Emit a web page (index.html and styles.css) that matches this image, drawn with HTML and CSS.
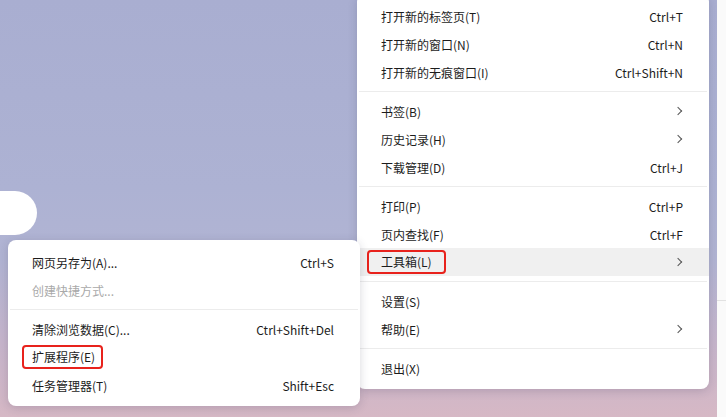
FILE: index.html
```html
<!DOCTYPE html>
<html lang="zh-CN">
<head>
    <meta charset="UTF-8">
    <meta name="viewport" content="width=device-width, initial-scale=1.0">
    <title>菜单</title>
    <link rel="stylesheet" href="styles.css">
</head>
<body>
    <div id="desk">
        <div class="page">
            <div class="pill"></div>
        </div>
        <div class="side">
            <div class="side_top"></div>
        </div>

        <div class="menu" id="main_menu">
            <div class="row"><span>打开新的标签页(T)</span><span class="key">Ctrl+T</span></div>
            <div class="row"><span>打开新的窗口(N)</span><span class="key">Ctrl+N</span></div>
            <div class="row"><span>打开新的无痕窗口(I)</span><span class="key">Ctrl+Shift+N</span></div>
            <div class="sep"></div>
            <div class="row"><span>书签(B)</span><span class="arrow"></span></div>
            <div class="row"><span>历史记录(H)</span><span class="arrow"></span></div>
            <div class="row"><span>下载管理(D)</span><span class="key">Ctrl+J</span></div>
            <div class="sep"></div>
            <div class="row"><span>打印(P)</span><span class="key">Ctrl+P</span></div>
            <div class="row"><span>页内查找(F)</span><span class="key">Ctrl+F</span></div>
            <div class="row hover"><span class="mark wide">工具箱(L)</span><span class="arrow"></span></div>
            <div class="sep"></div>
            <div class="row"><span>设置(S)</span></div>
            <div class="row"><span>帮助(E)</span><span class="arrow"></span></div>
            <div class="sep"></div>
            <div class="row"><span>退出(X)</span></div>
        </div>

        <div class="menu" id="sub_menu">
            <div class="row"><span>网页另存为(A)...</span><span class="key">Ctrl+S</span></div>
            <div class="row off"><span>创建快捷方式...</span></div>
            <div class="sep"></div>
            <div class="row"><span>清除浏览数据(C)...</span><span class="key">Ctrl+Shift+Del</span></div>
            <div class="row"><span class="mark tight">扩展程序(E)</span></div>
            <div class="row"><span>任务管理器(T)</span><span class="key">Shift+Esc</span></div>
        </div>
    </div>
</body>
</html>
```

FILE: styles.css
```css
body
{
    margin: 0;
    font-family: "Noto Sans CJK SC", "Noto Sans", sans-serif;
    font-size: 12px;
    color: #1c1c1c;
}
#desk
{
    position: relative;
    display: flex;
    width: 726px;
    height: 417px;
    overflow: hidden;
    background: linear-gradient(180deg, #a9aed1 0%, #adb2d3 45%, #b1b4d3 62%, #c6b5cb 82%, #d6b8c5 100%);
}
.page
{
    flex: 1;
    padding-top: 191px;
}
.pill
{
    width: 37px;
    height: 44px;
    background-color: #ffffff;
    border-radius: 0 22px 22px 0;
}
.side
{
    width: 9px;
    background-color: #fafafa;
}
.side_top
{
    height: 300px;
    border-bottom: 1px solid #e2e2e2;
}
.menu
{
    position: absolute;
    width: 352px;
    background-color: #ffffff;
    border-radius: 8px;
    box-shadow: 0px 2px 10px 0px rgba(40, 40, 70, 0.18);
}
#main_menu
{
    left: 357px;
    top: -6px;
    padding: 8px 0 7px 0;
}
#sub_menu
{
    left: 8px;
    top: 240px;
    padding: 8px 0 7px 0;
}
.row
{
    display: flex;
    justify-content: space-between;
    align-items: center;
    height: 28px;
    padding: 0 26px 0 24px;
}
.hover
{
    background-color: #f0f0f0;
}
.off
{
    color: #a9a9a9;
}
.key
{
    color: #1c1c1c;
}
.sep
{
    height: 1px;
    margin: 5px 2px;
    background-color: #ececec;
}
.arrow
{
    width: 5px;
    height: 5px;
    margin-right: 2px;
    border-top: 1.5px solid #555555;
    border-right: 1.5px solid #555555;
    transform: rotate(45deg);
}
.mark
{
    position: relative;
    display: inline-block;
    line-height: 18px;
}
.mark::after
{
    content: "";
    position: absolute;
    top: -3px;
    bottom: -3px;
    border: 2px solid #e8221c;
    border-radius: 4px;
}
.wide::after
{
    left: -14px;
    right: -14px;
}
.tight::after
{
    left: -10px;
    right: -8px;
}
```
